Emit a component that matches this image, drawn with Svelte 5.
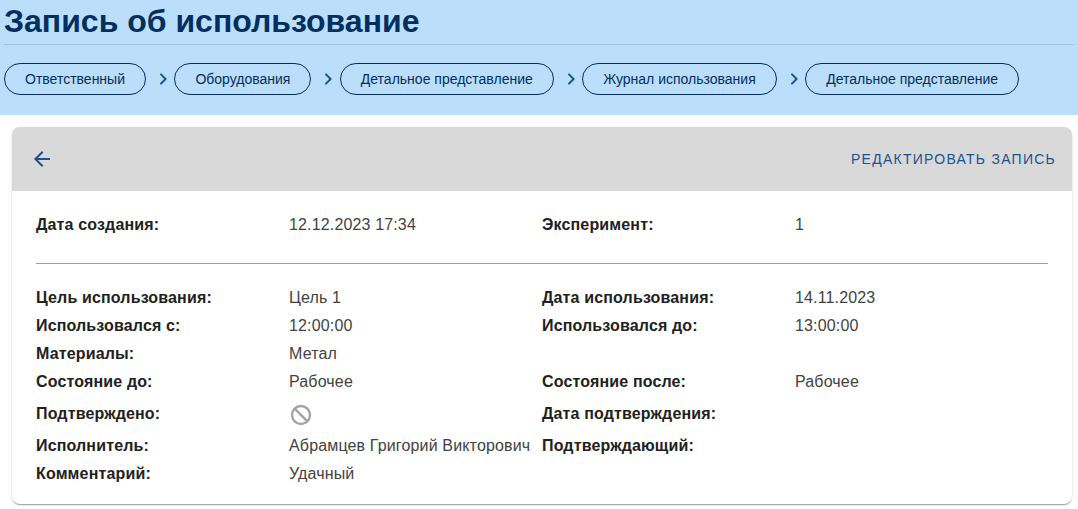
<script>
  const crumbs = [
    'Ответственный',
    'Оборудования',
    'Детальное представление',
    'Журнал использования',
    'Детальное представление'
  ];

  const rows = [
    { label: 'Цель использования:', value: 'Цель 1', label2: 'Дата использования:', value2: '14.11.2023' },
    { label: 'Использовался с:', value: '12:00:00', label2: 'Использовался до:', value2: '13:00:00' },
    { label: 'Материалы:', value: 'Метал', label2: '', value2: '' },
    { label: 'Состояние до:', value: 'Рабочее', label2: 'Состояние после:', value2: 'Рабочее' },
    { label: 'Подтверждено:', icon: true, label2: 'Дата подтверждения:', value2: '' },
    { label: 'Исполнитель:', value: 'Абрамцев Григорий Викторович', label2: 'Подтверждающий:', value2: '' },
    { label: 'Комментарий:', value: 'Удачный', label2: '', value2: '' }
  ];
</script>

<div class="page">
  <header class="top">
    <h1>Запись об использование</h1>
    <nav class="crumbs">
      {#each crumbs as crumb, i}
        {#if i > 0}
          <svg class="sep" width="24" height="24" viewBox="0 0 24 24">
            <path d="M9.29 6.71a1 1 0 0 0 0 1.41L13.17 12l-3.88 3.88a1 1 0 1 0 1.41 1.41l4.59-4.59a1 1 0 0 0 0-1.41L10.7 6.7a1 1 0 0 0-1.41.01z" />
          </svg>
        {/if}
        <button class="chip">{crumb}</button>
      {/each}
    </nav>
  </header>

  <section class="card">
    <div class="card-head">
      <button class="back" aria-label="Назад">
        <svg width="24" height="24" viewBox="0 0 24 24">
          <path d="M20 11H7.83l5.59-5.59L12 4l-8 8 8 8 1.41-1.41L7.83 13H20v-2z" />
        </svg>
      </button>
      <button class="edit">Редактировать запись</button>
    </div>

    <div class="card-body">
      <div class="grid">
        <span class="label">Дата создания:</span>
        <span class="value">12.12.2023 17:34</span>
        <span class="label">Эксперимент:</span>
        <span class="value">1</span>
      </div>
      <hr />
      <div class="grid">
        {#each rows as row}
          <span class="label">{row.label}</span>
          {#if row.icon}
            <span class="value icon-cell">
              <svg width="24" height="24" viewBox="0 0 24 24">
                <circle cx="12" cy="12" r="9" />
                <path d="M5.6 5.6l12.8 12.8" />
              </svg>
            </span>
          {:else}
            <span class="value">{row.value}</span>
          {/if}
          <span class="label">{row.label2}</span>
          <span class="value">{row.value2}</span>
        {/each}
      </div>
    </div>
  </section>
</div>

<style>
  :global(body) {
    margin: 0;
    background: #fff;
    font-family: "Liberation Sans", Arial, sans-serif;
  }

  .page {
    height: 509px;
    overflow: hidden;
  }

  .top {
    background: #bbdefb;
    height: 115px;
    padding: 0 4px;
    box-sizing: border-box;
  }

  h1 {
    margin: 0;
    height: 44px;
    border-bottom: 1px solid #9fc3e3;
    color: #012f5f;
    font-size: 32px;
    font-weight: 700;
    line-height: 42px;
  }

  .crumbs {
    display: flex;
    align-items: center;
    padding-top: 18px;
  }

  .chip {
    height: 32px;
    padding: 0 20px;
    border: 1px solid #012f5f;
    border-radius: 16px;
    background: transparent;
    color: #012f5f;
    font-family: inherit;
    font-size: 14px;
    white-space: nowrap;
  }

  .sep {
    fill: #1c5290;
    margin: 0 -0.6px 0 5px;
  }

  .card {
    margin: 12px 6px 0 12px;
    height: 377px;
    border-radius: 8px;
    background: #fff;
    box-shadow: 0 2px 1px -1px rgba(0, 0, 0, 0.2), 0 1px 1px 0 rgba(0, 0, 0, 0.14), 0 1px 3px 0 rgba(0, 0, 0, 0.12);
    overflow: hidden;
  }

  .card-head {
    height: 64px;
    background: #d9d9d9;
    display: flex;
    align-items: center;
    justify-content: space-between;
    padding: 0 16px 0 18px;
  }

  .back {
    display: flex;
    padding: 0;
    border: 0;
    background: none;
    fill: #1c5290;
  }

  .edit {
    padding: 0;
    border: 0;
    background: none;
    color: #1c5290;
    font-family: inherit;
    font-size: 14px;
    letter-spacing: 1.25px;
    text-transform: uppercase;
  }

  .card-body {
    padding: 20px 24px 0;
  }

  .grid {
    display: grid;
    grid-template-columns: 253px 253px 253px 253px;
    grid-auto-rows: minmax(28px, auto);
    align-items: center;
    color: #212121;
    font-size: 16px;
    letter-spacing: 0.15px;
  }

  hr {
    border: 0;
    border-top: 1px solid #9e9e9e;
    margin: 24px 0 20px;
  }

  .label {
    font-weight: 700;
  }

  .value {
    color: #424242;
    white-space: nowrap;
  }

  .icon-cell {
    display: flex;
    fill: none;
    stroke: #a3a3a3;
    stroke-width: 2.3;
    padding: 7px 0 5px;
  }
</style>
